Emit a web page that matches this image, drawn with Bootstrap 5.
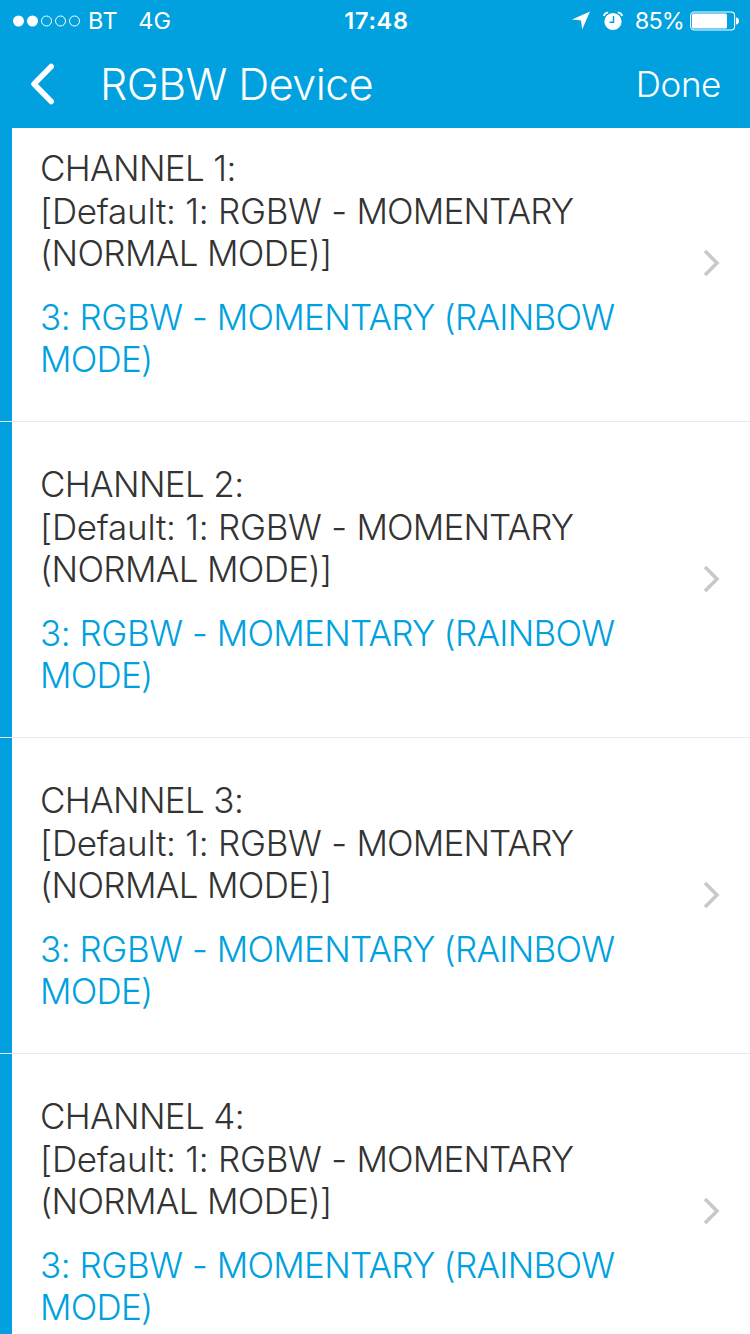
<!DOCTYPE html>
<html lang="en">
<head>
<meta charset="utf-8">
<meta name="viewport" content="width=device-width, initial-scale=1">
<title>RGBW Device</title>
<link href="https://cdn.jsdelivr.net/npm/bootstrap@5.3.0/dist/css/bootstrap.min.css" rel="stylesheet">
<style>
  :root { --brand: #00a1de; }
  body { font-family: Inter, "Liberation Sans", sans-serif; color: #333; height: 1334px; overflow: hidden; }
  svg { display: block; flex: none; }
  .app-head { background: var(--brand); height: 128px; color: #fff; }
  .status { height: 41px; font-size: 23.5px; line-height: 41px; padding: 0 11px 0 12px; display: grid; grid-template-columns: 1fr auto 1fr; }
  .carrier { margin-left: 6px; letter-spacing: .5px; }
  .network { margin-left: 20px; }
  .clock { font-weight: 600; letter-spacing: .7px; position: relative; left: 1px; }
  .pct { margin-left: 12px; letter-spacing: -.9px; }
  .alarm { margin-left: 13px; }
  .battery { margin-left: 6px; }
  .titlebar { height: 87px; padding: 0 29px 0 30px; }
  .back { margin-bottom: 2px; }
  .title { font-size: 43px; font-weight: 300; line-height: 87px; margin-left: 45px; letter-spacing: -.5px; }
  .done { font-size: 35px; line-height: 87px; color: #fff; font-weight: 350; letter-spacing: -.4px; }
  .channel { height: 316px; border-bottom: 1px solid #e9e9eb; padding-top: 41px; font-size: 35px; font-weight: 300; line-height: 42.5px; letter-spacing: -.65px; font-feature-settings: "calt" 0; box-shadow: inset 12px 0 var(--brand); }
  .channel:first-child { height: 294px; padding-top: 19px; }
  .copy { padding-left: 40px; white-space: nowrap; }
  .factory { letter-spacing: -.27px; }
  .kind { letter-spacing: -.85px; }
  .value { color: var(--brand); margin-top: 21px; line-height: 42px; letter-spacing: -.75px; }
  .number { letter-spacing: -.45px; }
  .chev { margin: 102px 29px 0 0; }
</style>
</head>
<body>
<header class="app-head">
  <div class="status">
    <div class="d-flex align-items-center">
      <svg width="70" height="14" fill="none" stroke="#fff"><circle cx="6.5" cy="7" r="5.5" fill="#fff" stroke="none"/><circle cx="20.5" cy="7" r="5.5" fill="#fff" stroke="none"/><circle cx="34.5" cy="7" r="5"/><circle cx="48.5" cy="7" r="5"/><circle cx="62.5" cy="7" r="5"/></svg>
      <span class="carrier">BT</span><span class="network">4G</span>
    </div>
    <div class="clock">17:48</div>
    <div class="d-flex align-items-center justify-content-end">
      <svg width="18" height="19" viewBox="0 0 18 19"><path fill="#fff" d="M18 .5 0 8.500 9 9.500 10.200 18.500Z"/></svg>
      <svg class="alarm" width="20" height="20" viewBox="0 0 20 20"><circle cx="10" cy="10.500" r="8.600" fill="#fff"/><path d="M10.500 5V11.200H6.500" fill="none" stroke="#00a1de" stroke-width="1.500"/><path d="M.8 5Q1.500 1.800 5.200 1.400M19.200 5Q18.500 1.800 14.800 1.400" fill="none" stroke="#fff" stroke-width="1.800"/></svg>
      <span class="pct">85%</span>
      <svg class="battery" width="49" height="20" viewBox="0 0 49 20"><rect x=".6" y="1" width="44" height="18" rx="3.500" fill="none" stroke="#fff" stroke-width="1.100"/><rect x="2" y="2.500" width="35" height="15" rx="1.500" fill="#fff"/><path fill="#fff" d="M46 6.500q3 .3 3 3.500t-3 3.500z"/></svg>
    </div>
  </div>
  <nav class="titlebar d-flex align-items-center">
    <svg class="back" width="25" height="42" viewBox="0 0 25 42" fill="none" stroke="#fff" stroke-width="5.500" stroke-linecap="round" stroke-linejoin="round"><path d="M21.200 3.500 4 21 21.200 38.500"/></svg>
    <h1 class="title mb-0">RGBW Device</h1>
    <a class="done ms-auto text-decoration-none" href="#">Done</a>
  </nav>
</header>
<main>
  <section class="channel"><div class="d-flex justify-content-between"><div class="copy"><div>CHANNEL 1:<br><span class="factory">[Default: 1: RGBW - </span><span class="kind">MOMENTARY</span><br>(NORMAL MODE)]</div><div class="value"><span class="number">3: RGBW - </span>MOMENTARY (RAINBOW<br>MODE)</div></div><svg class="chev" width="18" height="28" fill="none" stroke="#c7c7cc" stroke-width="3.500"><path d="M2 2 14 14 2 26"/></svg></div></section>
  <section class="channel"><div class="d-flex justify-content-between"><div class="copy"><div>CHANNEL 2:<br><span class="factory">[Default: 1: RGBW - </span><span class="kind">MOMENTARY</span><br>(NORMAL MODE)]</div><div class="value"><span class="number">3: RGBW - </span>MOMENTARY (RAINBOW<br>MODE)</div></div><svg class="chev" width="18" height="28" fill="none" stroke="#c7c7cc" stroke-width="3.500"><path d="M2 2 14 14 2 26"/></svg></div></section>
  <section class="channel"><div class="d-flex justify-content-between"><div class="copy"><div>CHANNEL 3:<br><span class="factory">[Default: 1: RGBW - </span><span class="kind">MOMENTARY</span><br>(NORMAL MODE)]</div><div class="value"><span class="number">3: RGBW - </span>MOMENTARY (RAINBOW<br>MODE)</div></div><svg class="chev" width="18" height="28" fill="none" stroke="#c7c7cc" stroke-width="3.500"><path d="M2 2 14 14 2 26"/></svg></div></section>
  <section class="channel"><div class="d-flex justify-content-between"><div class="copy"><div>CHANNEL 4:<br><span class="factory">[Default: 1: RGBW - </span><span class="kind">MOMENTARY</span><br>(NORMAL MODE)]</div><div class="value"><span class="number">3: RGBW - </span>MOMENTARY (RAINBOW<br>MODE)</div></div><svg class="chev" width="18" height="28" fill="none" stroke="#c7c7cc" stroke-width="3.500"><path d="M2 2 14 14 2 26"/></svg></div></section>
</main>
<script src="https://cdn.jsdelivr.net/npm/bootstrap@5.3.0/dist/js/bootstrap.bundle.min.js"></script>
</body>
</html>
